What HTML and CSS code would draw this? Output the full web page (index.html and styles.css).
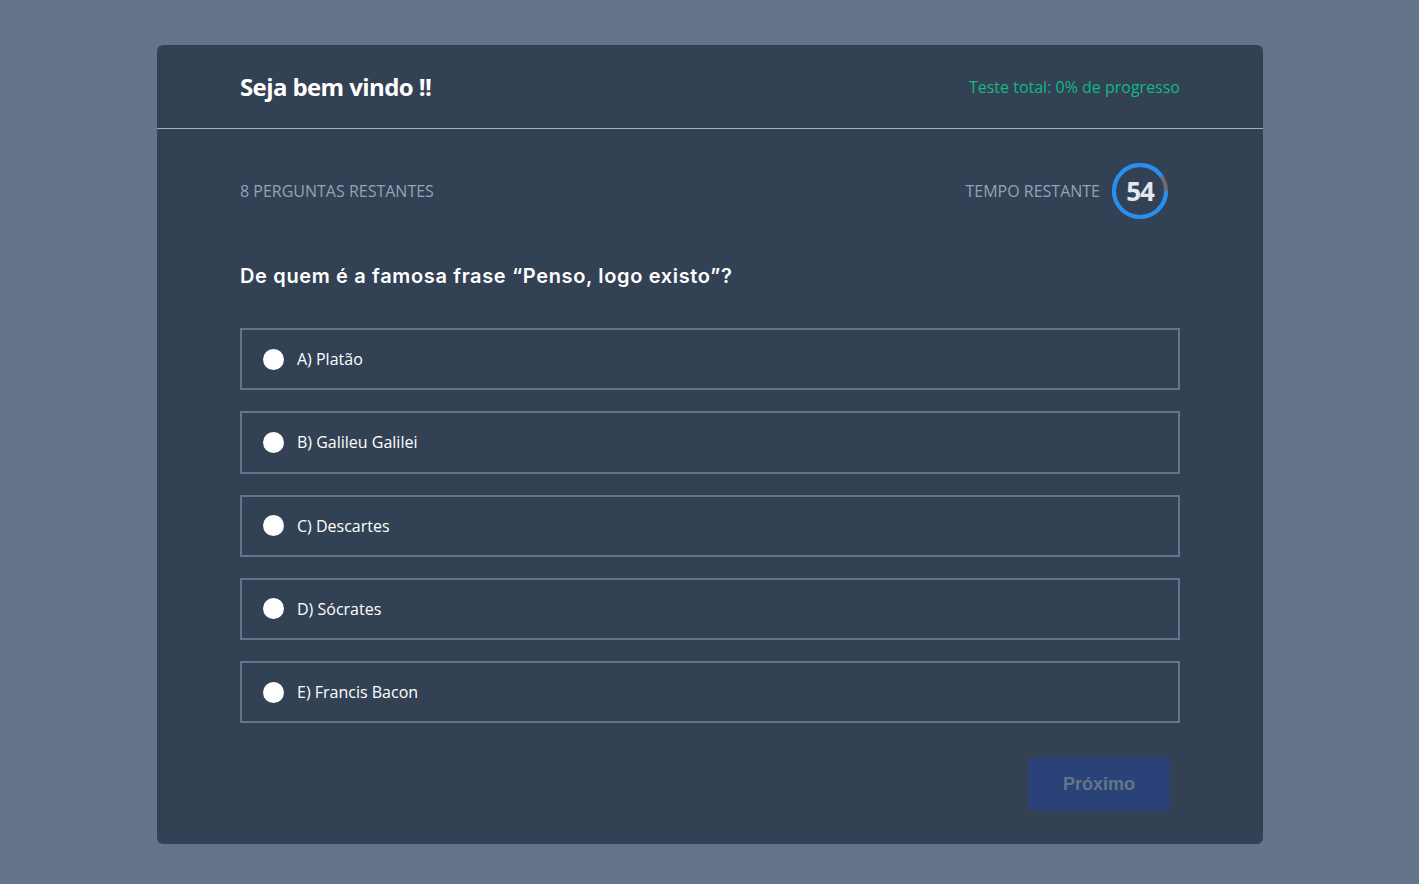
FILE: index.html
```html
<!DOCTYPE html>
<html lang="pt">
<head>
<meta charset="utf-8">
<title>Quiz</title>
<link rel="stylesheet" href="styles.css">
</head>
<body>
<main class="card">
  <header class="card-header">
    <h1 class="title">Seja bem vindo !!</h1>
    <span class="progress">Teste total: 0% de progresso</span>
  </header>
  <section class="card-body">
    <div class="status">
      <span class="remaining">8 PERGUNTAS RESTANTES</span>
      <div class="timer">
        <span class="timer-label">TEMPO RESTANTE</span>
        <div class="timer-ring">
          <svg width="56" height="56" viewBox="0 0 56 56">
            <circle cx="28" cy="28" r="26" fill="none" stroke="#6b6f74" stroke-width="4"/>
            <circle cx="28" cy="28" r="26" fill="none" stroke="#2390f5" stroke-width="4" stroke-dasharray="147.03 163.36"/>
          </svg>
          <span class="timer-num">54</span>
        </div>
      </div>
    </div>
    <h2 class="question">De quem é a famosa frase “Penso, logo existo”?</h2>
    <ul class="options">
      <li class="option"><span class="radio"></span><span>A) Platão</span></li>
      <li class="option"><span class="radio"></span><span>B) Galileu Galilei</span></li>
      <li class="option"><span class="radio"></span><span>C) Descartes</span></li>
      <li class="option"><span class="radio"></span><span>D) Sócrates</span></li>
      <li class="option"><span class="radio"></span><span>E) Francis Bacon</span></li>
    </ul>
    <div class="actions">
      <button class="next">Próximo</button>
    </div>
  </section>
</main>
</body>
</html>
```

FILE: styles.css
```css
* { box-sizing: border-box; }
html, body { margin: 0; padding: 0; }
body {
  background: #64748b;
  font-family: "Open Sans", sans-serif;
  padding: 45px 156px 40px 157px;
}
.card {
  background: #334155;
  border-radius: 6px;
  width: 1106px;
  height: 799px;
}
.card-header {
  box-sizing: content-box;
  height: 83px;
  border-bottom: 1px solid #a3b0c2;
  display: flex;
  align-items: center;
  justify-content: space-between;
  padding: 0 83px 0 83px;
}
.title {
  margin: 0;
  color: #fff;
  font-size: 24px;
  font-weight: 700;
  letter-spacing: -0.6px;
}
.progress {
  color: #10b981;
  font-size: 16px;
}
.card-body {
  padding: 34px 83px 0 83px;
}
.status {
  display: flex;
  justify-content: space-between;
  align-items: center;
  padding-right: 12px;
}
.remaining, .timer-label {
  color: #94a3b8;
  font-size: 16px;
}
.timer {
  display: flex;
  align-items: center;
  gap: 12px;
}
.timer-ring {
  position: relative;
  width: 56px;
  height: 56px;
}
.timer-ring svg { display: block; }
.timer-num {
  position: absolute;
  inset: 0;
  display: flex;
  align-items: center;
  justify-content: center;
  color: #e2e8f0;
  font-size: 26px;
  font-weight: 700;
  letter-spacing: -1px;
}
.question {
  margin: 42px 0 0;
  line-height: 30px;
  color: #fff;
  font-family: Inter, sans-serif;
  font-size: 20px;
  font-weight: 600;
  letter-spacing: 0.65px;
}
.options {
  list-style: none;
  margin: 37px 0 0;
  padding: 0;
  display: flex;
  flex-direction: column;
  gap: 21px;
}
.option {
  height: 62.25px;
  border: 2px solid #64748b;
  display: flex;
  align-items: center;
  padding-left: 21px;
  gap: 13px;
  color: #fff;
  font-size: 16px;
  font-weight: 500;
}
.radio {
  width: 21px;
  height: 21px;
  border-radius: 50%;
  background: #fff;
}
.actions {
  display: flex;
  justify-content: flex-end;
  padding-right: 10px;
  margin-top: 35px;
}
.next {
  width: 142px;
  height: 52px;
  border: none;
  background: #2a4277;
  color: #64748b;
  font-family: "Liberation Sans", Arial, sans-serif;
  font-weight: 700;
  font-size: 18px;
}
```
